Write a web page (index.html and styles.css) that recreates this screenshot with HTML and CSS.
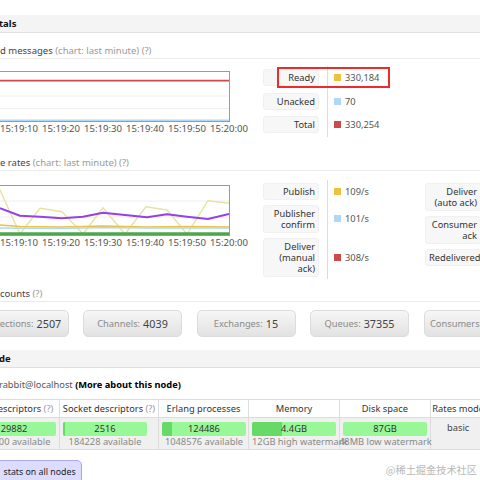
FILE: index.html
```html
<!DOCTYPE html>
<html>
<head>
<meta charset="utf-8">
<link rel="stylesheet" href="styles.css">
</head>
<body>
<div class="page">
  <h2 class="band">tals</h2>
  <h3 class="sub sub-1"><span class="sub-title">d messages</span> <span class="sub-note">(chart: last minute) (?)</span></h3>
  <div class="chart-row row-1">
    <div class="chart-col">
      <div class="chart">
        <svg width="229" height="49" viewBox="0 0 229 49">
          <line class="grid" x1="0" y1="24" x2="229" y2="24"/>
          <line class="grid" x1="0" y1="36.5" x2="229" y2="36.5"/>
          <polyline class="s-red" points="0,8.6 229,8.6"/>
          <polyline class="s-blue" points="0,48.2 229,48.2"/>
        </svg>
      </div>
      <div class="axis"><span>15:19:10</span><span>15:19:20</span><span>15:19:30</span><span>15:19:40</span><span>15:19:50</span><span>15:20:00</span></div>
    </div>
    <div class="legend legend-queued">
      <div class="lg-row"><div class="lg-label">Ready</div><div class="lg-val"><i class="sw sw-yellow"></i>330,184</div></div>
      <div class="lg-row"><div class="lg-label">Unacked</div><div class="lg-val"><i class="sw sw-blue"></i>70</div></div>
      <div class="lg-row"><div class="lg-label">Total</div><div class="lg-val"><i class="sw sw-red"></i>330,254</div></div>
      <div class="highlight"></div>
    </div>
  </div>

  <h3 class="sub sub-2"><span class="sub-title">e rates</span> <span class="sub-note">(chart: last minute) (?)</span></h3>
  <div class="chart-row row-2">
    <div class="chart-col">
      <div class="chart">
        <svg width="229" height="49" viewBox="0 0 229 49">
          <line class="grid" x1="0" y1="15" x2="229" y2="15"/>
          <line class="grid" x1="0" y1="31" x2="229" y2="31"/>
          <polyline class="s-khaki" points="-8,-12 0,4 20,48 40,22.3 62,25.7 83,48 103,21.7 125,48 146,20.7 167,24 187,48 208,14.7 229,17.3"/>
          <polyline class="s-orange" points="0,39 20,40.5 62,41 103,40 146,41 187,40.5 229,41"/>
          <polyline class="s-blue" points="0,42 62,42.5 103,41.5 146,42 187,42 229,42"/>
          <polyline class="s-purple" points="0,22.3 20,29.7 40,30.7 62,32.3 83,30.7 103,26.7 125,29 147,31.3 167,28.3 187,30.7 208,33 229,28"/>
          <polyline class="s-green" points="0,47.6 229,47.6"/>
        </svg>
      </div>
      <div class="axis"><span>15:19:10</span><span>15:19:20</span><span>15:19:30</span><span>15:19:40</span><span>15:19:50</span><span>15:20:00</span></div>
    </div>
    <div class="legend legend-rates">
      <div class="lg-row"><div class="lg-label">Publish</div><div class="lg-val"><i class="sw sw-yellow"></i>109/s</div></div>
      <div class="lg-row"><div class="lg-label">Publisher<br>confirm</div><div class="lg-val"><i class="sw sw-blue"></i>101/s</div></div>
      <div class="lg-row"><div class="lg-label">Deliver<br>(manual<br>ack)</div><div class="lg-val"><i class="sw sw-red"></i>308/s</div></div>
    </div>
    <div class="legend legend-right">
      <div class="lg-row"><div class="lg-label">Deliver<br>(auto ack)</div></div>
      <div class="lg-row"><div class="lg-label">Consumer<br>ack</div></div>
      <div class="lg-row"><div class="lg-label">Redelivered</div></div>
    </div>
  </div>

  <h3 class="sub sub-3"><span class="sub-title">counts</span> <span class="sub-note">(?)</span></h3>
  <div class="counts">
    <div class="count-btn"><span class="c-label">Connections:</span> <span class="c-num">2507</span></div>
    <div class="count-btn"><span class="c-label">Channels:</span> <span class="c-num">4039</span></div>
    <div class="count-btn"><span class="c-label">Exchanges:</span> <span class="c-num">15</span></div>
    <div class="count-btn"><span class="c-label">Queues:</span> <span class="c-num">37355</span></div>
    <div class="count-btn"><span class="c-label">Consumers:</span> <span class="c-num">37355</span></div>
  </div>

  <h2 class="band band-node">de</h2>
  <p class="node-line"><span class="node-name">rabbit@localhost</span> <b>(More about this node)</b></p>

  <div class="node-table">
    <div class="th">File descriptors <span class="q">(?)</span></div>
    <div class="th">Socket descriptors <span class="q">(?)</span></div>
    <div class="th">Erlang processes</div>
    <div class="th">Memory</div>
    <div class="th">Disk space</div>
    <div class="th">Rates mode</div>

    <div class="td"><div class="stat"><div class="bar"><div class="fill" style="width:4%"></div><span>29882</span></div><div class="avail">204800 available</div></div></div>
    <div class="td"><div class="stat"><div class="bar"><div class="fill" style="width:2%"></div><span>2516</span></div><div class="avail">184228 available</div></div></div>
    <div class="td"><div class="stat"><div class="bar"><div class="fill" style="width:12%"></div><span>124486</span></div><div class="avail">1048576 available</div></div></div>
    <div class="td"><div class="stat"><div class="bar"><div class="fill" style="width:36%"></div><span>4.4GB</span></div><div class="avail">12GB high watermark</div></div></div>
    <div class="td"><div class="stat"><div class="bar"><span>87GB</span></div><div class="avail avail-disk">48MB low watermark</div></div></div>
    <div class="td td-mode">basic</div>
  </div>

  <button class="nodes-btn">stats on all nodes</button>
</div>
<div class="watermark">@稀土掘金技术社区</div>
</body>
</html>
```

FILE: styles.css
```css
html, body {
  margin: 0;
  padding: 0;
  background: #fff;
}
body {
  font-family: "Noto Sans", "DejaVu Sans", sans-serif;
  font-size: 9.3px;
  color: #333;
  overflow: hidden;
  width: 480px;
  height: 480px;
  position: relative;
}
.page {
  padding-top: 15px;
}
.band {
  margin: 0;
  height: 17px;
  line-height: 18px;
  background: #f4f4f4;
  border-bottom: 1px solid #e0e0e0;
  font-size: 9.5px;
  font-weight: bold;
  color: #111;
  text-indent: -1px;
}
.sub {
  margin: 0;
  font-weight: normal;
  font-size: 9.5px;
  line-height: 14px;
  border-bottom: 1px solid #eaeaea;
}
.sub-title { color: #444; }
.sub-note { color: #999; }
.sub-1 { margin-top: 11px; }
.sub-2 { margin-top: 19.5px; }
.sub-3 { margin-top: 8px; }

.chart-row {
  display: flex;
  align-items: flex-start;
}
.row-1 { margin-top: 7px; }
.row-2 { margin-top: 9px; }
.chart-col {
  width: 230px;
  flex: none;
  margin-right: 33px;
}
.chart {
  margin-top: 5px;
  width: 229px;
  height: 49px;
  border: 1px solid #9a9a9a;
  border-left: none;
}
.chart svg {
  display: block;
  overflow: hidden;
}
.grid { stroke: #eeeeee; stroke-width: 1; }
polyline { fill: none; stroke-linejoin: round; }
.s-red { stroke: #cb4b4b; stroke-width: 1.6; }
.s-blue { stroke: #afd8f8; stroke-width: 1.6; }
.s-orange { stroke: #edc240; stroke-width: 1.4; }
.s-khaki { stroke: #e8e2a2; stroke-width: 1.4; }
.s-purple { stroke: #9440ed; stroke-width: 2; }
.s-green { stroke: #4da74d; stroke-width: 2.6; }

.axis {
  display: flex;
  margin-left: -2px;
  margin-top: 1px;
  font-size: 9.6px;
  line-height: 12px;
  color: #545454;
  white-space: nowrap;
}
.axis span {
  width: 42px;
  flex: none;
  text-align: center;
}

.legend {
  display: flex;
  flex-direction: column;
  position: relative;
  flex: none;
}
.legend-rates { width: 157px; margin-right: 5px; }
.lg-row {
  display: flex;
  align-items: stretch;
}
.lg-label {
  width: 56px;
  box-sizing: border-box;
  margin: 2.5px 0;
  padding: 2px 3px;
  line-height: 11px;
  text-align: right;
  background: #f7f7f7;
  border: 1px solid #f0f0f0;
  border-radius: 3px;
  color: #333;
  white-space: nowrap;
}
.legend-queued .lg-label { margin: 3.25px 0; }
.lg-val {
  flex: 1;
  margin-left: 8px;
  border-left: 1px solid #dcdcdc;
  padding-left: 6px;
  display: flex;
  align-items: center;
  gap: 4px;
  color: #555;
  white-space: nowrap;
}
.sw {
  display: inline-block;
  width: 7px;
  height: 7px;
}
.sw-yellow { background: #edc240; }
.sw-blue { background: #afd8f8; }
.sw-red { background: #cb4b4b; }
.highlight {
  position: absolute;
  left: 14px;
  top: 1px;
  width: 113px;
  height: 21px;
  box-sizing: border-box;
  border: 2px solid #ee2a2a;
}

.counts {
  display: flex;
  gap: 14.5px;
  margin-top: 8px;
  margin-left: -30.5px;
}
.count-btn {
  flex: none;
  width: 99px;
  height: 27px;
  box-sizing: border-box;
  border: 1px solid #dcdcdc;
  border-radius: 5px;
  background: linear-gradient(#f6f6f6, #e2e2e2);
  display: flex;
  align-items: center;
  justify-content: center;
  gap: 3px;
  white-space: nowrap;
}
.c-label { color: #8a8a8a; font-size: 9.3px; }
.c-num { color: #444; font-size: 10.8px; }

.band-node { margin-top: 13px; }
.node-line {
  margin: 10px 0 0 -1px;
  line-height: 14px;
  font-size: 9.3px;
  color: #555;
}
.node-line b { color: #000; }

.node-table {
  margin-top: 7px;
  margin-left: -31px;
  display: grid;
  grid-template-columns: 91px 99px 90px 91px 90.7px 56px;
  border-top: 1px solid #dcdcdc;
  background: linear-gradient(to bottom, #fff 18px, #f0f0f0 18px);
}
.th, .td {
  border-right: 1px solid #dcdcdc;
  border-bottom: 1px solid #dcdcdc;
  box-sizing: border-box;
  white-space: nowrap;
}
.th {
  padding: 2.5px 0;
  line-height: 12px;
  text-align: center;
  color: #333;
}
.q { color: #999; }
.td {
  padding: 4px 3px 2px;
}
.stat {
  width: 84px;
  text-align: center;
}
.bar {
  position: relative;
  height: 14px;
  line-height: 14px;
  background: #98f898;
  border-radius: 2px;
  overflow: hidden;
  color: #333;
}
.fill {
  position: absolute;
  left: 0;
  top: 0;
  bottom: 0;
  background: #66d966;
}
.bar span { position: relative; }
.avail {
  line-height: 11px;
  color: #888;
}
.avail-disk { margin-left: -4px; }
.td-mode {
  text-align: center;
  padding-top: 3px;
  line-height: 14px;
  color: #444;
}

.nodes-btn {
  display: block;
  margin: 10px 0 0 -10px;
  padding: 0 5px 0 12.5px;
  height: 24px;
  border: 1px solid #a9a9e6;
  border-radius: 5px;
  background: #dcdcff;
  font-family: inherit;
  font-size: 8.8px;
  color: #222;
}

.watermark {
  position: absolute;
  right: 3px;
  top: 463px;
  font-family: "Noto Sans CJK SC", sans-serif;
  font-size: 10.2px;
  line-height: 14px;
  color: #b8b8b8;
}
```
